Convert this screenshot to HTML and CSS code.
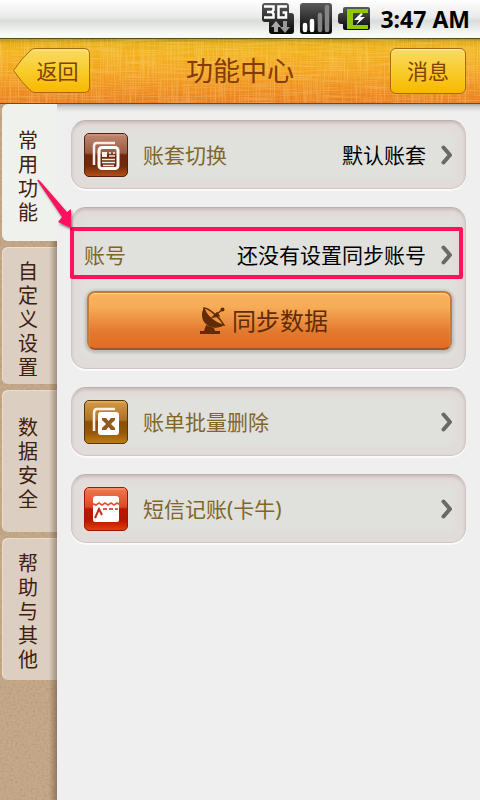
FILE: index.html
```html
<!DOCTYPE html>
<html lang="zh-CN">
<head>
<meta charset="utf-8">
<meta name="viewport" content="width=device-width, initial-scale=1">
<title>功能中心</title>
<link rel="stylesheet" href="styles.css">
</head>
<body>
<div class="app">
  <div class="status">
    <svg width="33" height="34" viewBox="0 0 33 34" aria-hidden="true">
      <defs><linearGradient id="dark" x1="0" y1="0" x2="0" y2="1"><stop offset="0" stop-color="#5a5a5a"/><stop offset=".5" stop-color="#303030"/><stop offset="1" stop-color="#080808"/></linearGradient></defs>
      <path d="M3 1H24Q27 1 27 4V11H29Q32 11 32 14V29Q32 32 29 32H10Q7 32 7 29V20H3Q0 20 0 17V4Q0 1 3 1Z" fill="url(#dark)"/>
      <path d="M2 4.500H11.500V8L10 10L11.500 12V15.500H2M5 10H10M25 4.500H16.500V15.500H24V10.500H20.500" fill="none" stroke="#fff" stroke-width="2.500"/>
      <path d="M14 19L19 25H16V30H12V25H9Z" fill="#aaa"/><path d="M21 19H25V25H28L23 31L18 25H21Z" fill="#999"/>
    </svg>
    <svg width="32" height="34" viewBox="0 0 32 34" aria-hidden="true">
      <rect y="1" width="32" height="31" rx="3" fill="url(#dark)"/>
      <g stroke-width="4.500" stroke-linecap="round"><path d="M5 23V28M12 19V28" stroke="#fff"/><path d="M20 13V28M27 5V28" stroke="#858585"/></g>
    </svg>
    <svg class="battery" width="33" height="34" viewBox="0 0 33 34" aria-hidden="true">
      <path d="M7 5H30Q32 5 32 7V26Q32 28 30 28H7Q5 28 5 26V22H3Q0 22 0 19V14Q0 11 3 11H5V7Q5 5 7 5Z" fill="url(#dark)"/>
      <path d="M9 7H30V11H15V23H30V27H9Z" fill="#90c808"/>
      <path d="M23 11L16 18H21L18 23L27 15H22L25 12Z" fill="#fff"/>
    </svg>
    <time class="clock">3:47 AM</time>
  </div>

  <header class="header">
    <svg class="texture" aria-hidden="true">
      <filter id="weft" x="0" y="0" width="100%" height="100%"><feTurbulence type="fractalNoise" baseFrequency=".025 .8" numOctaves="3" seed="4"/><feColorMatrix values="0 0 0 0 1  0 0 0 0 .85  0 0 0 0 .4  2 0 0 0 -.8"/></filter>
      <filter id="warp" x="0" y="0" width="100%" height="100%"><feTurbulence type="fractalNoise" baseFrequency=".7 .025" numOctaves="3" seed="8"/><feColorMatrix values="0 0 0 0 1  0 0 0 0 .85  0 0 0 0 .4  2 0 0 0 -.8"/></filter>
      <rect width="100%" height="100%" filter="url(#weft)"/><rect width="100%" height="100%" filter="url(#warp)"/>
    </svg>
    <button class="nav-button back" type="button">
      <svg width="77" height="46" viewBox="0 0 77 46" aria-hidden="true">
        <defs><linearGradient id="gold" x1="0" y1="0" x2="0" y2="1"><stop offset="0" stop-color="#f9dc66"/><stop offset=".55" stop-color="#f9ca28"/><stop offset="1" stop-color="#f8b800"/></linearGradient></defs>
        <path d="M.5 22.500Q9 10 17 3Q19 .5 22 .5H71Q76.500 .5 76.500 6V39Q76.500 44.500 71 44.500H22Q19 44.500 17 42Q9 35 .5 22.500Z" fill="url(#gold)" stroke="#a7690e"/>
        <path d="M20 2H71Q75 2 75 6" fill="none" stroke="#fff0a0" opacity=".6"/>
      </svg>
      <span>返回</span>
    </button>
    <h1>功能中心</h1>
    <button class="nav-button message" type="button">消息</button>
  </header>

  <div class="body">
    <nav class="sidebar">
      <svg class="texture grain" aria-hidden="true">
        <filter id="grain" x="0" y="0" width="100%" height="100%"><feTurbulence type="fractalNoise" baseFrequency=".45" numOctaves="2" seed="3"/><feColorMatrix values="0 0 0 0 .42  0 0 0 0 .28  0 0 0 0 .16  2.500 0 0 0 -1.050"/></filter>
        <rect width="100%" height="100%" filter="url(#grain)"/>
      </svg>
      <a class="tab active" href="#common" aria-current="page">常用功能</a>
      <a class="tab" href="#custom">自定义设置</a>
      <a class="tab tall" href="#security">数据安全</a>
      <a class="tab tall" href="#help">帮助与其他</a>
    </nav>

    <main class="main" id="common">
      <a class="card row" href="#book">
        <svg class="icon" viewBox="0 0 44 44" aria-hidden="true">
          <defs><linearGradient id="brown" x1="0" y1="0" x2="0" y2="1"><stop offset="0" stop-color="#c08a72"/><stop offset=".45" stop-color="#985b41"/><stop offset=".5" stop-color="#70290a"/><stop offset=".75" stop-color="#702b0b"/><stop offset="1" stop-color="#b84f16"/></linearGradient></defs>
          <rect x=".5" y=".5" width="43" height="43" rx="4.500" fill="url(#brown)" stroke="#55200b"/>
          <path d="M3 2H41" stroke="#dfad92" opacity=".6"/>
          <path d="M10 32V13Q10 10 13 10H31" fill="none" stroke="#f3eeeb" stroke-width="2.500"/>
          <rect x="15" y="14.500" width="19" height="21" rx="3" fill="none" stroke="#fff" stroke-width="3"/>
          <path d="M18 19H23V24H18Z" fill="#f3eeeb"/>
          <path d="M25 20H27M29 20H31M25 23H31M18 26.500H31M18 29.500H31M19 32.500H30" fill="none" stroke="#f3eeeb" stroke-width="1.500"/>
        </svg>
        <span class="label">账套切换</span><span class="value">默认账套</span>
        <svg class="chevron" viewBox="0 0 12 20" aria-hidden="true"><path d="M2.500 2.500L9 10L2.500 17.500"/></svg>
      </a>

      <section class="card sync-card">
        <a class="row account" href="#account">
          <span class="label">账号</span><span class="value">还没有设置同步账号</span>
          <svg class="chevron" viewBox="0 0 12 20" aria-hidden="true"><path d="M2.500 2.500L9 10L2.500 17.500"/></svg>
          <span class="highlight"></span>
          <svg class="pointer" viewBox="0 0 40 52" aria-hidden="true"><path d="M1 2Q2 1 4 3L31 34L35 31V50L22 44L26 39Z" fill="#ff1160"/></svg>
        </a>
        <button class="sync" type="button">
          <svg width="26" height="28" viewBox="0 0 26 28" aria-hidden="true">
            <path d="M4 1C0 7 2 16 9 19C14 22 20 21 24 18Z" fill="#612c05"/>
            <path d="M4 1C9 1 20 11 24 18C16 17 5 8 4 1Z" fill="#ed9542" stroke="#612c05" stroke-width="1.500"/>
            <path d="M13 10L22 3M13 10L19 9L17 6Z" fill="#612c05" stroke="#612c05" stroke-width="1.500"/><circle cx="22.500" cy="2.500" r="2" fill="#612c05"/>
            <path d="M6 18L14 21L15 24H20V27H0V24H4Z" fill="#612c05"/>
          </svg>
          <span>同步数据</span>
        </button>
      </section>

      <a class="card row" href="#delete">
        <svg class="icon" viewBox="0 0 44 44" aria-hidden="true">
          <defs><linearGradient id="ochre" x1="0" y1="0" x2="0" y2="1"><stop offset="0" stop-color="#d69b48"/><stop offset=".45" stop-color="#ae7224"/><stop offset=".5" stop-color="#8c5004"/><stop offset=".75" stop-color="#965807"/><stop offset="1" stop-color="#c57c12"/></linearGradient></defs>
          <rect x=".5" y=".5" width="43" height="43" rx="4.500" fill="url(#ochre)" stroke="#513809"/>
          <path d="M3 2H41" stroke="#f1ce8f" opacity=".6"/>
          <path d="M10 31V13Q10 9 13 9H31" fill="none" stroke="#f8f1e7" stroke-width="2.500"/>
          <rect x="14" y="12" width="21" height="23" rx="3" fill="#fff"/>
          <path d="M18 18H22L24.500 21L27 18H31V20L27 24L31 28V30H27L24.500 27L22 30H18V28L22 24L18 20Z" fill="#905a20"/>
        </svg>
        <span class="label">账单批量删除</span>
        <svg class="chevron" viewBox="0 0 12 20" aria-hidden="true"><path d="M2.500 2.500L9 10L2.500 17.500"/></svg>
      </a>

      <a class="card row" href="#sms">
        <svg class="icon" viewBox="0 0 44 44" aria-hidden="true">
          <defs><linearGradient id="red" x1="0" y1="0" x2="0" y2="1"><stop offset="0" stop-color="#ef7a50"/><stop offset=".45" stop-color="#dc4a28"/><stop offset=".5" stop-color="#bb1800"/><stop offset=".75" stop-color="#b51600"/><stop offset="1" stop-color="#e44104"/></linearGradient></defs>
          <rect x=".5" y=".5" width="43" height="43" rx="4.500" fill="url(#red)" stroke="#9d1609"/>
          <path d="M3 2H41" stroke="#ffb59c" opacity=".6"/>
          <path d="M9 12Q9 9 12 9H32Q35 9 35 12V16L33 15L30 17L27 15L24 17L21 15L18 17L15 15L12 17L9 16Z" fill="#fff"/>
          <path d="M9 18L12 19L15 17L18 19L21 17L24 19L27 17L30 19L33 17L35 18V33Q35 35 32 35H12Q9 35 9 33Z" fill="#fff"/>
          <path d="M19 22H34" stroke="#c42b17" stroke-width="1.500" stroke-dasharray="4 2"/><path d="M11 31L15 22L18 28" fill="none" stroke="#c42b17" stroke-width="2"/>
        </svg>
        <span class="label">短信记账(卡牛)</span>
        <svg class="chevron" viewBox="0 0 12 20" aria-hidden="true"><path d="M2.500 2.500L9 10L2.500 17.500"/></svg>
      </a>
    </main>
  </div>
</div>
</body>
</html>
```
FILE: styles.css
```css
* { box-sizing: border-box; }
body { margin: 0; font-family: "Noto Sans", "Noto Sans CJK SC", sans-serif; font-weight: 400; background: #efefef; }
a { color: inherit; text-decoration: none; }
button { font: inherit; cursor: pointer; }
svg { display: block; flex: none; }
.app { min-height: 100vh; display: flex; flex-direction: column; }

.status { height: 38px; display: flex; align-items: center; justify-content: flex-end; gap: 5px; padding: 0 10px; background: linear-gradient(#fff, #e9eae9 45%, #dadcda 55%, #f7faf7 90%); }
.battery { margin-left: 1px; }
.clock { margin-left: 4px; font-size: 23px; line-height: 38px; font-weight: 700; color: #000; white-space: nowrap; }

.header { position: relative; height: 66px; display: flex; align-items: center; justify-content: space-between; padding: 0 14px 0 13px; background: linear-gradient(#a98b10, #e7ac16 4px, #f2b11b 12px, #f3a21d 50%, #ea7c1e); border-top: 1px solid #51500e; border-bottom: 1px solid #75491d; }
.texture { position: absolute; inset: 0; width: 100%; height: 100%; opacity: .55; }
.header .texture { opacity: .35; }
.header h1 { position: relative; margin: 0; font-size: 27px; line-height: 40px; font-weight: 400; color: #853b05; }
.nav-button { position: relative; width: 77px; height: 46px; padding: 0; border: 0; background: none; font-size: 21px; line-height: 44px; color: #80400a; }
.back svg { position: absolute; inset: 0; }
.back span { position: relative; padding-left: 12px; }
.message { width: 76px; height: 46px; border: 1px solid #a7690e; border-radius: 6px; background: linear-gradient(#f9dc66, #f9ca28 55%, #f8b800); box-shadow: inset 0 1px 1px #fff0a0; }

.body { flex: 1; display: flex; }
.sidebar { position: relative; width: 57px; flex: none; display: flex; flex-direction: column; gap: 6px; padding-left: 2px; background: #c5a98b; }
.sidebar::after { content: ""; position: absolute; inset: 0 0 0 auto; width: 8px; background: linear-gradient(90deg, transparent, rgba(70, 50, 30, .4)); }
.tab { position: relative; min-height: 137px; display: flex; align-items: center; justify-content: center; padding: 8px 17px 0 16px; border-radius: 6px 0 0 6px; background: #dccfc1; box-shadow: inset 1px 1px 0 #e8ddd1; font-size: 20px; line-height: 24px; word-break: break-all; color: #40200f; }
.tab.tall { min-height: 142px; padding-top: 6px; }
.tab.active { z-index: 1; background: #eff2ec; box-shadow: none; }

.main { flex: 1; min-width: 0; display: flex; flex-direction: column; gap: 18px; padding: 16px 14px; background: linear-gradient(#a9a9a9, #d2d2d2 3px, #efefef 8px); }
.card { border: 1px solid #d0c7c4; border-top-color: #beb1ad; border-radius: 15px; background: #e0e0dc; box-shadow: inset 0 2px 3px rgba(150, 115, 110, .3), inset 0 0 4px 10px #e1dcda, 0 2px 0 #fafafa; }
.row { display: flex; align-items: center; font-size: 21px; line-height: 30px; }
.card.row { min-height: 69px; padding: 1px 12px 1px 12px; }
.icon { width: 44px; height: 44px; margin-right: 15px; }
.label { color: #806629; white-space: nowrap; }
.value { margin-left: auto; color: #000; white-space: nowrap; }
.chevron { width: 12px; height: 20px; margin-left: auto; fill: none; stroke: #696969; stroke-width: 4; stroke-linecap: round; stroke-linejoin: round; }
.value + .chevron { margin-left: 15px; }
.sync-card { padding: 19px 12px 18px; }
.account { position: relative; height: 56px; padding-bottom: 1px; }
.highlight { position: absolute; inset: 0 -10px 4px -14px; border: 4px solid #ff1160; border-radius: 2px; }
.pointer { position: absolute; left: -48px; top: -49px; z-index: 3; width: 40px; height: 52px; filter: drop-shadow(1px 2px 1px rgba(0, 0, 0, .45)); }
.sync { width: calc(100% - 4px); height: 59px; margin: 8px 1px 0 3px; padding: 0 11px 0 0; display: flex; align-items: center; justify-content: center; gap: 6px; border: 2px solid #c27b3c; border-bottom-color: #a9512a; border-radius: 8px; background: linear-gradient(#f8b45c, #f6ac56 25%, #e47930 70%, #df6d20); box-shadow: inset 0 1px 1px #ffdc9b, 0 1px 3px 2px #bbbcb6; font-size: 24px; line-height: 36px; color: #612c05; }
```
